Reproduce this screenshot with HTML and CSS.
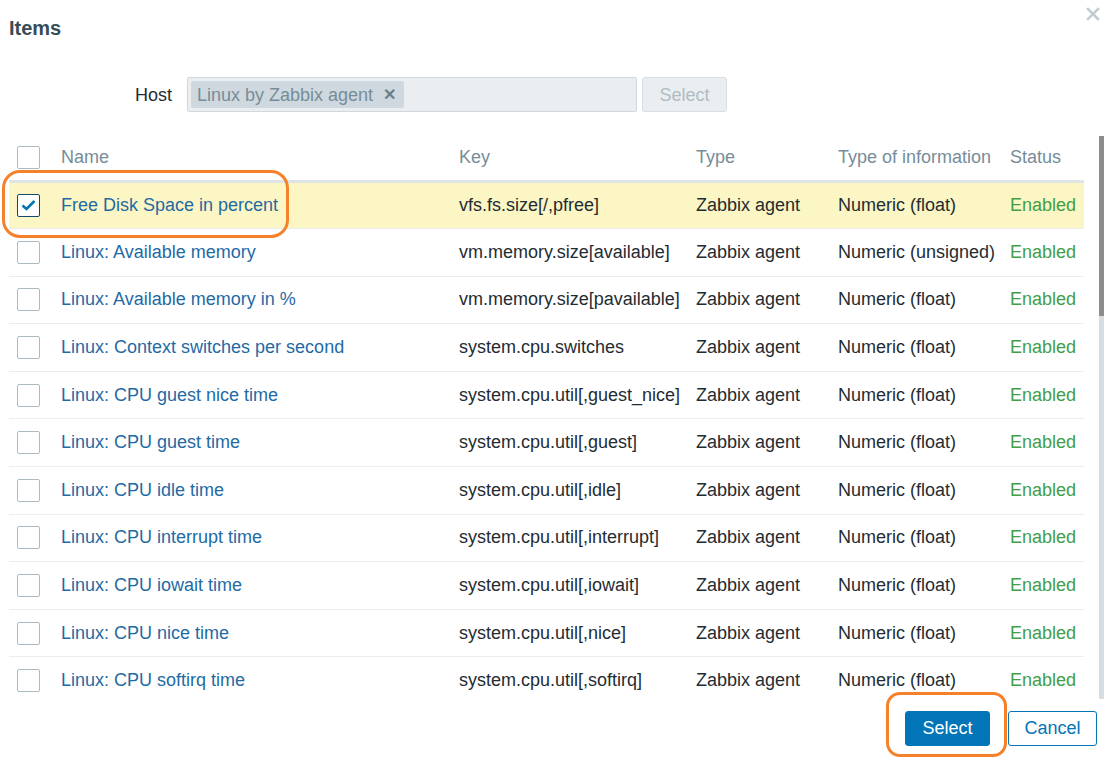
FILE: index.html
```html
<!DOCTYPE html>
<html>
<head>
<meta charset="utf-8">
<link rel="stylesheet" href="styles.css">
</head>
<body>
<div class="dialog">
  <div class="head">
    <h1 class="title">Items</h1>
    <span class="close">
      <svg width="14" height="14" viewBox="0 0 14 14"><path d="M2 2L12 12M12 2L2 12" stroke="#c3ccd1" stroke-width="2.6" stroke-linecap="square"/></svg>
    </span>
  </div>
  <div class="form">
    <label class="lbl">Host</label>
    <div class="ms">
      <span class="chip">Linux by Zabbix agent <span class="chipx">✕</span></span>
    </div>
    <button class="btn-dis">Select</button>
  </div>
  <div class="list">
    <div class="scroller">
      <table class="tbl">
        <colgroup>
          <col class="c1"><col class="c2"><col class="c3"><col class="c4"><col class="c5"><col class="c6">
        </colgroup>
        <thead>
          <tr><th><span class="cb"></span></th><th>Name</th><th>Key</th><th>Type</th><th>Type of information</th><th>Status</th></tr>
        </thead>
        <tbody>
          <tr class="sel"><td><span class="cb on"><svg width="15" height="12" viewBox="0 0 15 12"><path d="M1.5 6.5L5.5 10L13.5 2" fill="none" stroke="#0275b8" stroke-width="2.6"/></svg></span></td><td><a class="lnk">Free Disk Space in percent</a></td><td>vfs.fs.size[/,pfree]</td><td>Zabbix agent</td><td>Numeric (float)</td><td class="ok">Enabled</td></tr>
          <tr><td><span class="cb"></span></td><td><a class="lnk">Linux: Available memory</a></td><td>vm.memory.size[available]</td><td>Zabbix agent</td><td>Numeric (unsigned)</td><td class="ok">Enabled</td></tr>
          <tr><td><span class="cb"></span></td><td><a class="lnk">Linux: Available memory in %</a></td><td>vm.memory.size[pavailable]</td><td>Zabbix agent</td><td>Numeric (float)</td><td class="ok">Enabled</td></tr>
          <tr><td><span class="cb"></span></td><td><a class="lnk">Linux: Context switches per second</a></td><td>system.cpu.switches</td><td>Zabbix agent</td><td>Numeric (float)</td><td class="ok">Enabled</td></tr>
          <tr><td><span class="cb"></span></td><td><a class="lnk">Linux: CPU guest nice time</a></td><td>system.cpu.util[,guest_nice]</td><td>Zabbix agent</td><td>Numeric (float)</td><td class="ok">Enabled</td></tr>
          <tr><td><span class="cb"></span></td><td><a class="lnk">Linux: CPU guest time</a></td><td>system.cpu.util[,guest]</td><td>Zabbix agent</td><td>Numeric (float)</td><td class="ok">Enabled</td></tr>
          <tr><td><span class="cb"></span></td><td><a class="lnk">Linux: CPU idle time</a></td><td>system.cpu.util[,idle]</td><td>Zabbix agent</td><td>Numeric (float)</td><td class="ok">Enabled</td></tr>
          <tr><td><span class="cb"></span></td><td><a class="lnk">Linux: CPU interrupt time</a></td><td>system.cpu.util[,interrupt]</td><td>Zabbix agent</td><td>Numeric (float)</td><td class="ok">Enabled</td></tr>
          <tr><td><span class="cb"></span></td><td><a class="lnk">Linux: CPU iowait time</a></td><td>system.cpu.util[,iowait]</td><td>Zabbix agent</td><td>Numeric (float)</td><td class="ok">Enabled</td></tr>
          <tr><td><span class="cb"></span></td><td><a class="lnk">Linux: CPU nice time</a></td><td>system.cpu.util[,nice]</td><td>Zabbix agent</td><td>Numeric (float)</td><td class="ok">Enabled</td></tr>
          <tr><td><span class="cb"></span></td><td><a class="lnk">Linux: CPU softirq time</a></td><td>system.cpu.util[,softirq]</td><td>Zabbix agent</td><td>Numeric (float)</td><td class="ok">Enabled</td></tr>
        </tbody>
      </table>
    </div>
    <div class="sbar"><div class="thumb"></div><div class="track"></div></div>
  </div>
  <div class="foot">
    <button class="btn-main">Select</button>
    <button class="btn-alt">Cancel</button>
  </div>
  <div class="mark mark-row"></div>
  <div class="mark mark-btn"></div>
</div>
</body>
</html>
```

FILE: styles.css
```css
* { box-sizing: border-box; }
html, body { margin: 0; padding: 0; background: #fff; }
body { font-family: "Liberation Sans", Arial, sans-serif; font-size: 18px; color: #1f2c33; width: 1104px; height: 758px; overflow: hidden; }
.dialog { position: relative; width: 1104px; height: 758px; }
.head { height: 56px; display: flex; align-items: center; justify-content: space-between; padding: 0 4px 0 9px; }
.title { margin: 0; font-size: 20px; font-weight: bold; color: #374c59; line-height: 56px; }
.close { align-self: flex-start; margin-top: 7px; display: flex; }
.form { display: flex; align-items: center; padding-top: 21px; height: 56px; }
.lbl { width: 172px; text-align: right; color: #1f2c33; margin-right: 15px; padding-top: 2px; }
.ms { width: 450px; height: 35px; background: #ebeef0; border: 1px solid #cfd8dd; border-radius: 2px; padding: 3px; display: flex; }
.chip { height: 27px; background: #cfd8de; border-radius: 2px; color: #768d99; padding: 0 6px; line-height: 28px; display: inline-flex; align-items: center; gap: 10px; width: 213px; }
.chipx { font-size: 16px; font-weight: bold; color: #6a808c; }
.btn-dis { margin-left: 5px; width: 85px; height: 35px; border: 1px solid #d8dfe3; background: #ebeef0; border-radius: 3px; color: #aebdc4; font-family: inherit; font-size: 18px; padding-top: 2px; }
.list { display: flex; margin-top: 23px; height: 565px; }
.scroller { flex: 0 0 1090px; overflow: hidden; padding-left: 9px; padding-right: 15px; }
.tbl { width: 1075px; border-collapse: collapse; table-layout: fixed; }
.c1 { width: 44px; } .c2 { width: 398px; } .c3 { width: 237px; } .c4 { width: 142px; } .c5 { width: 172px; } .c6 { width: 82px; }
.tbl th { height: 46px; text-align: left; font-weight: normal; color: #768d99; padding: 0 0 0 8px; border-bottom: 3px solid #dfe4e7; white-space: nowrap; vertical-align: middle; }
.tbl td { height: 47.6px; padding: 0 0 0 8px; border-bottom: 1px solid #ebeef0; white-space: nowrap; vertical-align: middle; overflow: hidden; }
.tbl tr.sel td { background: #fbf6c4; }
.lnk { color: #1f6aa5; text-decoration: none; }
.ok { color: #429e47; }
.cb { display: block; width: 23px; height: 23px; border: 1px solid #acbbc2; border-radius: 2px; background: #fff; }
.cb.on { border-color: #13486e; display: flex; align-items: center; justify-content: center; }
.sbar { width: 5px; margin-left: 9px; display: flex; flex-direction: column; height: 563px; margin-top: 1px; }
.thumb { height: 180px; background: #8c8c8c; }
.track { flex: 1; background: #d6dee3; }
.foot { display: flex; justify-content: flex-end; gap: 18px; padding-right: 7px; margin-top: 11px; }
.btn-main { width: 85px; height: 35px; background: #0275b8; color: #fff; border: 1px solid #0275b8; border-radius: 3px; font-family: inherit; font-size: 18px; }
.btn-alt { width: 89px; height: 35px; background: #fff; color: #0275b8; border: 1px solid #0275b8; border-radius: 3px; font-family: inherit; font-size: 18px; }
.mark { position: absolute; border: 3px solid #f5822a; pointer-events: none; }
.mark-row { left: 2px; top: 170px; width: 287px; height: 68px; border-radius: 18px; }
.mark-btn { left: 886px; top: 692px; width: 121px; height: 65px; border-radius: 14px; }
```
